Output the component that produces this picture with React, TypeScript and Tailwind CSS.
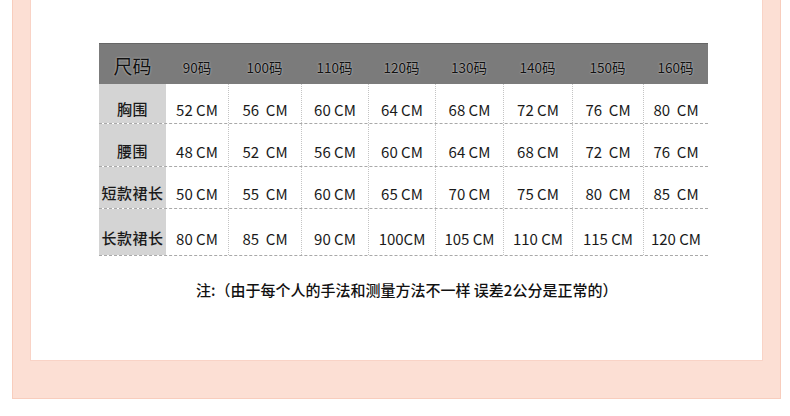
const cols = ["90码", "100码", "110码", "120码", "130码", "140码", "150码", "160码"]

const rows = [
  { label: "胸围", h: "h-[40px]", values: ["52 CM", "56  CM", "60 CM", "64 CM", "68 CM", "72 CM", "76  CM", "80  CM"] },
  { label: "腰围", h: "h-[43px]", values: ["48 CM", "52  CM", "56 CM", "60 CM", "64 CM", "68 CM", "72  CM", "76  CM"] },
  { label: "短款裙长", h: "h-[42px]", values: ["50 CM", "55  CM", "60 CM", "65 CM", "70 CM", "75 CM", "80  CM", "85  CM"] },
  { label: "长款裙长", h: "h-[47px]", values: ["80 CM", "85  CM", "90 CM", "100CM", "105 CM", "110 CM", "115 CM", "120 CM"] },
]

const grid = "grid grid-cols-[67px_62px_73px_67px_67px_68px_69px_71px_65px]"

export default function App() {
  return (
    <div className="w-[790px] h-[416px] bg-white font-['Noto_Sans_CJK_SC',sans-serif] text-[#1a1a1a]">
      <div className="ml-[12px] w-[769px] h-[399px] bg-[#fcdfd4] border-x border-b border-[#f8cdbd]">
        <div className="ml-[17px] w-[733px] h-[361px] bg-white border-x border-b border-[#f9d3c6] pt-[43px] pl-[68px]">
          <div className="w-[609px]">
            <div className={`${grid} h-[41px] bg-[#7b7b7b] border-t border-[#666]`}>
              <div className="flex items-center justify-center pt-[5px] text-[19px] text-[#111] [text-shadow:0_0_2px_#cfcfcf]">尺码</div>
              {cols.map((c) => (
                <div key={c} className="flex items-center justify-center pt-[6px] text-[13.5px] text-[#111] [text-shadow:0_0_2px_#d8d8d8]">
                  {c}
                </div>
              ))}
            </div>
            {rows.map((r) => (
              <div key={r.label} className={`${grid} ${r.h} border-b border-dashed border-[#a9a9a9]`}>
                <div className="flex items-center justify-center pt-[12px] bg-[#d4d4d4] text-[15px] font-medium tracking-[0.5px]">
                  {r.label}
                </div>
                {r.values.map((v, i) => (
                  <div
                    key={i}
                    className={`flex items-center justify-center pt-[14px] text-[15px] whitespace-pre ${i > 0 ? "border-l border-dotted border-[#c4c4c4]" : ""}`}
                  >
                    {v}
                  </div>
                ))}
              </div>
            ))}
          </div>
          <p className="mt-[23px] ml-[97px] text-[15px] font-medium text-[#111] whitespace-pre">
            注:（由于每个人的手法和测量方法不一样 误差2公分是正常的）
          </p>
        </div>
      </div>
    </div>
  )
}
